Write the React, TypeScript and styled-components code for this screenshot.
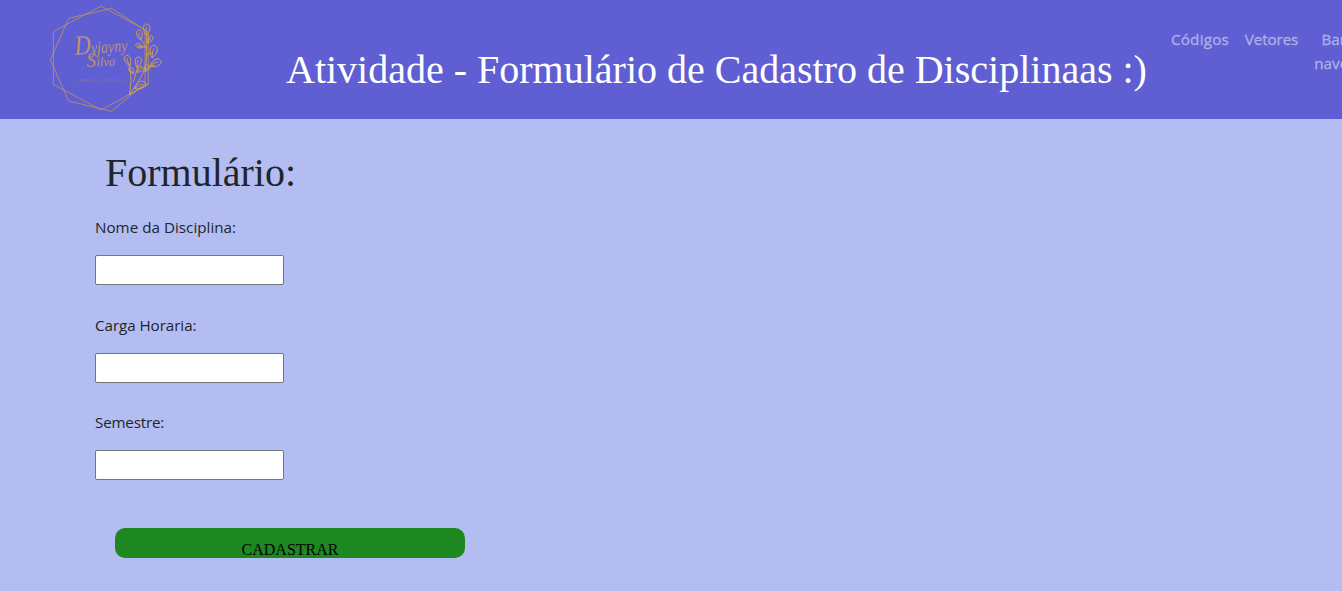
import React from "react";
import styled, { createGlobalStyle } from "styled-components";

const GlobalStyle = createGlobalStyle`
  *, *::before, *::after { box-sizing: border-box; }
  body {
    margin: 0;
    min-height: 100vh;
    overflow: hidden;
    background: #b3bdf2;
    color: #212529;
    font: 400 16px/24px "Open Sans", "Noto Sans", sans-serif;
  }
`;

const Header = styled.header`
  display: flex;
  align-items: flex-start;
  height: 119px;
  padding-left: 40px;
  background: #5f5fd3;
  overflow: hidden;
`;

const LogoArt = styled.svg`
  flex: none;
  width: 130px;
  height: 119px;
`;

const Title = styled.h1`
  flex: none;
  width: 861px;
  margin: 46px 0 0 116px;
  color: #fff;
  font: 500 40px/48px "Liberation Serif", serif;
  white-space: nowrap;
`;

const Nav = styled.nav`
  display: flex;
  flex: none;
  margin: 27px 0 0 16px;
`;

const NavLink = styled.a<{ $width: number; $spacing?: number }>`
  flex: none;
  width: ${(p) => p.$width}px;
  padding: 0 7px;
  color: #afafe9;
  font-size: 15.2px;
  letter-spacing: ${(p) => p.$spacing ?? 0}px;
  text-align: center;
  text-decoration: none;
  -webkit-text-stroke: 0.3px #afafe9;
`;

const Form = styled.form`
  display: flex;
  flex-direction: column;
  align-items: flex-start;
  padding: 30px 0 0 95px;
`;

const FormTitle = styled.h2`
  margin: 0 0 18px 10px;
  font: 500 40px/48px "Liberation Serif", serif;
`;

const Field = styled.div`
  display: flex;
  flex-direction: column;
  height: 97.6px;
`;

const Label = styled.label<{ $spacing: number }>`
  margin-bottom: 16px;
  font-size: 15.2px;
  letter-spacing: ${(p) => p.$spacing}px;
`;

const Input = styled.input`
  width: 189px;
  height: 30px;
  padding: 1px 2px;
  border: 1px solid #767676;
  border-radius: 2px;
  background: #fff;
  font: inherit;
`;

const Submit = styled.button`
  width: 350px;
  height: 30px;
  margin: 20px 0 0 20px;
  padding: 13px 0 0;
  border: 0;
  border-radius: 10px;
  background: #1d8820;
  color: #000;
  font: 16px/18px "Liberation Serif", serif;
`;

// x, y, rotation, half length of each leaf on the branch
const leaves = [
  [320, 89, 0, 17], [299, 105, -12, 15], [340, 155, 10, 19], [346, 190, 62, 18],
  [264, 182, -20, 16], [294, 187, 10, 16], [330, 118, 30, 12], [298, 138, -65, 11],
  [275, 212, -35, 11], [300, 209, 45, 11], [320, 205, 20, 11], [300, 257, 60, 18],
];

function Logo() {
  return (
    <LogoArt viewBox="0 0 390 357" fill="none" stroke="#bd965f" strokeWidth="2.4">
      <path d="M183 18 325 95V253L183 330 40 253V95Z" />
      <path d="M215 25 315 90V250L215 334 86 303 31 180 86 55Z" />
      <g stroke="#d5a548" strokeWidth="2.6">
        <path d="M268 284C288 252 316 225 320 174V95M318 142 303 118M318 165 338 158M316 211 343 194M280 246 294 200M268 284C274 248 275 220 266 195M268 284 325 250M320 130 330 116M318 142 297 136" />
        {leaves.map(([x, y, angle, size]) => (
          <g key={`${x}-${y}`} transform={`translate(${x} ${y}) rotate(${angle})`}>
            <path d={`M0 ${size}C${-size * 0.8} 2 ${-size * 0.7} ${-size} 0 ${-size}C${size * 0.7} ${-size} ${size * 0.8} 2 0 ${size}M0 ${size}C-3 2 -2 -4 0 ${-size * 0.5}`} />
          </g>
        ))}
      </g>
      <g fill="#bd936d" stroke="none" fontFamily="Liberation Serif, serif" fontStyle="italic">
        <text x="104" y="159" fontSize="52" textLength="158" lengthAdjust="spacingAndGlyphs" transform="rotate(-4 182 140)">
          <tspan fontSize="82">D</tspan>yjayny
        </text>
        <text x="140" y="199" fontSize="40" textLength="86" lengthAdjust="spacingAndGlyphs" transform="rotate(-3 182 190)">
          <tspan fontSize="60">S</tspan>ilva
        </text>
        <text x="108" y="245" fontSize="13" textLength="150" fontStyle="normal" fontFamily="Liberation Sans, sans-serif" fill="#8f7682">DESENVOLVIMENTO</text>
      </g>
    </LogoArt>
  );
}

const fields = [
  { id: "nome", label: "Nome da Disciplina:", spacing: 0.02 },
  { id: "carga", label: "Carga Horaria:", spacing: -0.06 },
  { id: "semestre", label: "Semestre:", spacing: -0.2 },
];

export default function App() {
  return (
    <>
      <GlobalStyle />
      <Header>
        <Logo />
        <Title>Atividade - Formulário de Cadastro de Disciplinaas :)</Title>
        <Nav>
          <NavLink $width={74} $spacing={0.25}>Códigos</NavLink>
          <NavLink $width={69} $spacing={-0.1}>Vetores</NavLink>
          <NavLink $width={92}>Barra de navegação</NavLink>
        </Nav>
      </Header>
      <Form>
        <FormTitle>Formulário:</FormTitle>
        {fields.map((f) => (
          <Field key={f.id}>
            <Label htmlFor={f.id} $spacing={f.spacing}>{f.label}</Label>
            <Input id={f.id} />
          </Field>
        ))}
        <Submit type="button">CADASTRAR</Submit>
      </Form>
    </>
  );
}
